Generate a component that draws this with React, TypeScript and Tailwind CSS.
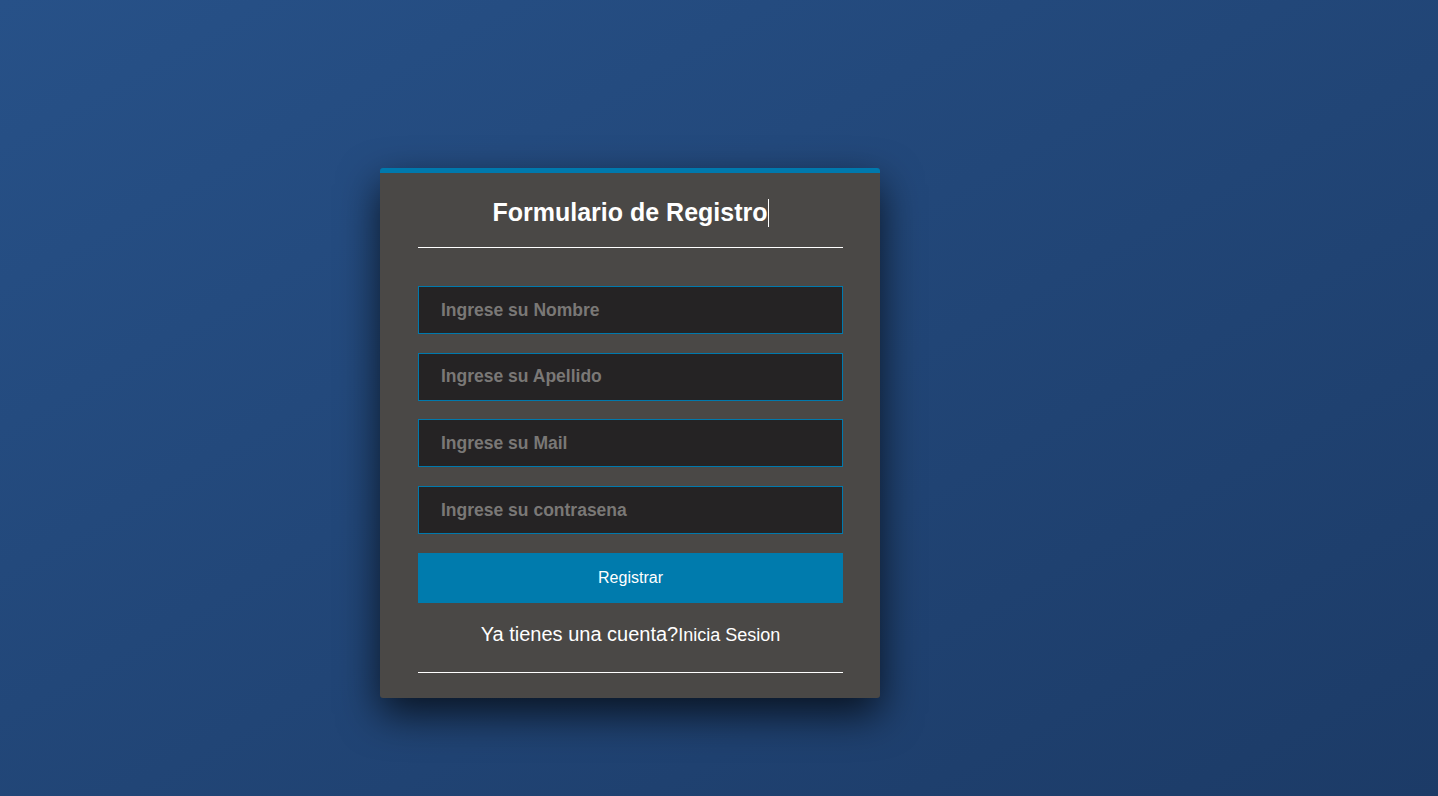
export default function App() {
  const campos = [
    "Ingrese su Nombre",
    "Ingrese su Apellido",
    "Ingrese su Mail",
    "Ingrese su contrasena",
  ];

  return (
    <main
      className="min-h-screen w-full bg-gradient-to-br from-[#275188] to-[#1c3b67] pt-[168px] pl-[380px]"
      style={{ fontFamily: '"Liberation Sans", Arial, sans-serif' }}
    >
      <div className="w-[500px] bg-[#4a4846] rounded-[3px] border-t-[5px] border-[#0079ad] shadow-[0_16px_40px_rgba(0,0,0,0.7)] pl-[38px] pr-[37px] pb-[25px]">
        {/* Titulo */}
        <h1 className="text-center text-white font-bold text-[25px] leading-none pt-[26px]">
          Formulario de Registro
          <span className="inline-block w-px h-[28px] bg-white align-[-6px]"></span>
        </h1>
        <div className="h-px bg-white mt-[20px]"></div>

        {/* Campos */}
        <form className="mt-[38px] flex flex-col gap-[18.7px]">
          {campos.map((c) => (
            <input
              key={c}
              type="text"
              placeholder={c}
              className="w-full h-[48px] bg-[#252324] border border-[#0079ad] px-[22px] text-[17.5px] font-bold text-white placeholder:text-[#7a7876] outline-none"
            />
          ))}

          <button
            type="button"
            className="w-full h-[50px] bg-[#007bad] text-white text-[16px]"
          >
            Registrar
          </button>
        </form>

        <p className="text-center text-white mt-[21px] leading-none">
          <span className="text-[20px]">Ya tienes una cuenta?</span>
          <span className="text-[18px]">Inicia Sesion</span>
        </p>

        <div className="h-px bg-white mt-[28px]"></div>
      </div>
    </main>
  );
}
